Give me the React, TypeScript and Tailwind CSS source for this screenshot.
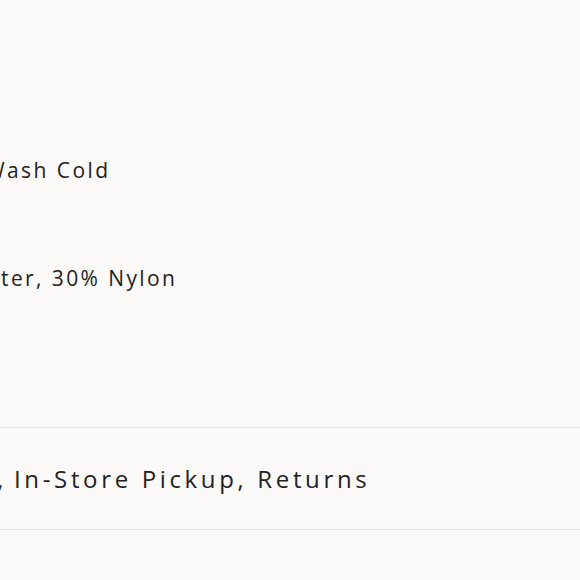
function CutLine({
  hidden,
  edge,
  shown,
  gap,
  className,
}: {
  hidden: string;
  edge: string;
  shown: string;
  gap: string;
  className: string;
}) {
  return (
    <div className={`flex whitespace-nowrap ${className}`}>
      <div className={`flex shrink-0 justify-end ${edge}`}>
        <span>{hidden}</span>
      </div>
      <span className={gap}>{shown}</span>
    </div>
  );
}

export default function App() {
  return (
    <div className="min-h-screen w-full overflow-hidden bg-[#fbfaf8] text-[#222222] font-['Open_Sans','Noto_Sans',sans-serif]">
      <div className="pt-[150px]">
        <CutLine
          hidden="Machine W"
          edge="w-[7px]"
          shown="ash Cold"
          gap="ml-0"
          className="text-[21px] leading-[40px] tracking-[2.45px]"
        />
        <CutLine
          hidden="70% Polyes"
          edge="w-[1px]"
          shown="ter, 30% Nylon"
          gap="ml-0"
          className="mt-[68px] text-[21px] leading-[40px] tracking-[2.4px]"
        />
      </div>
      <div className="mt-[129px] flex h-[103px] items-center border-y border-[#e6e2de]">
        <CutLine
          hidden="Free Shipping,"
          edge="w-[7px]"
          shown="In-Store Pickup, Returns"
          gap="ml-[7px]"
          className="text-[24px] tracking-[3.65px]"
        />
      </div>
    </div>
  );
}
